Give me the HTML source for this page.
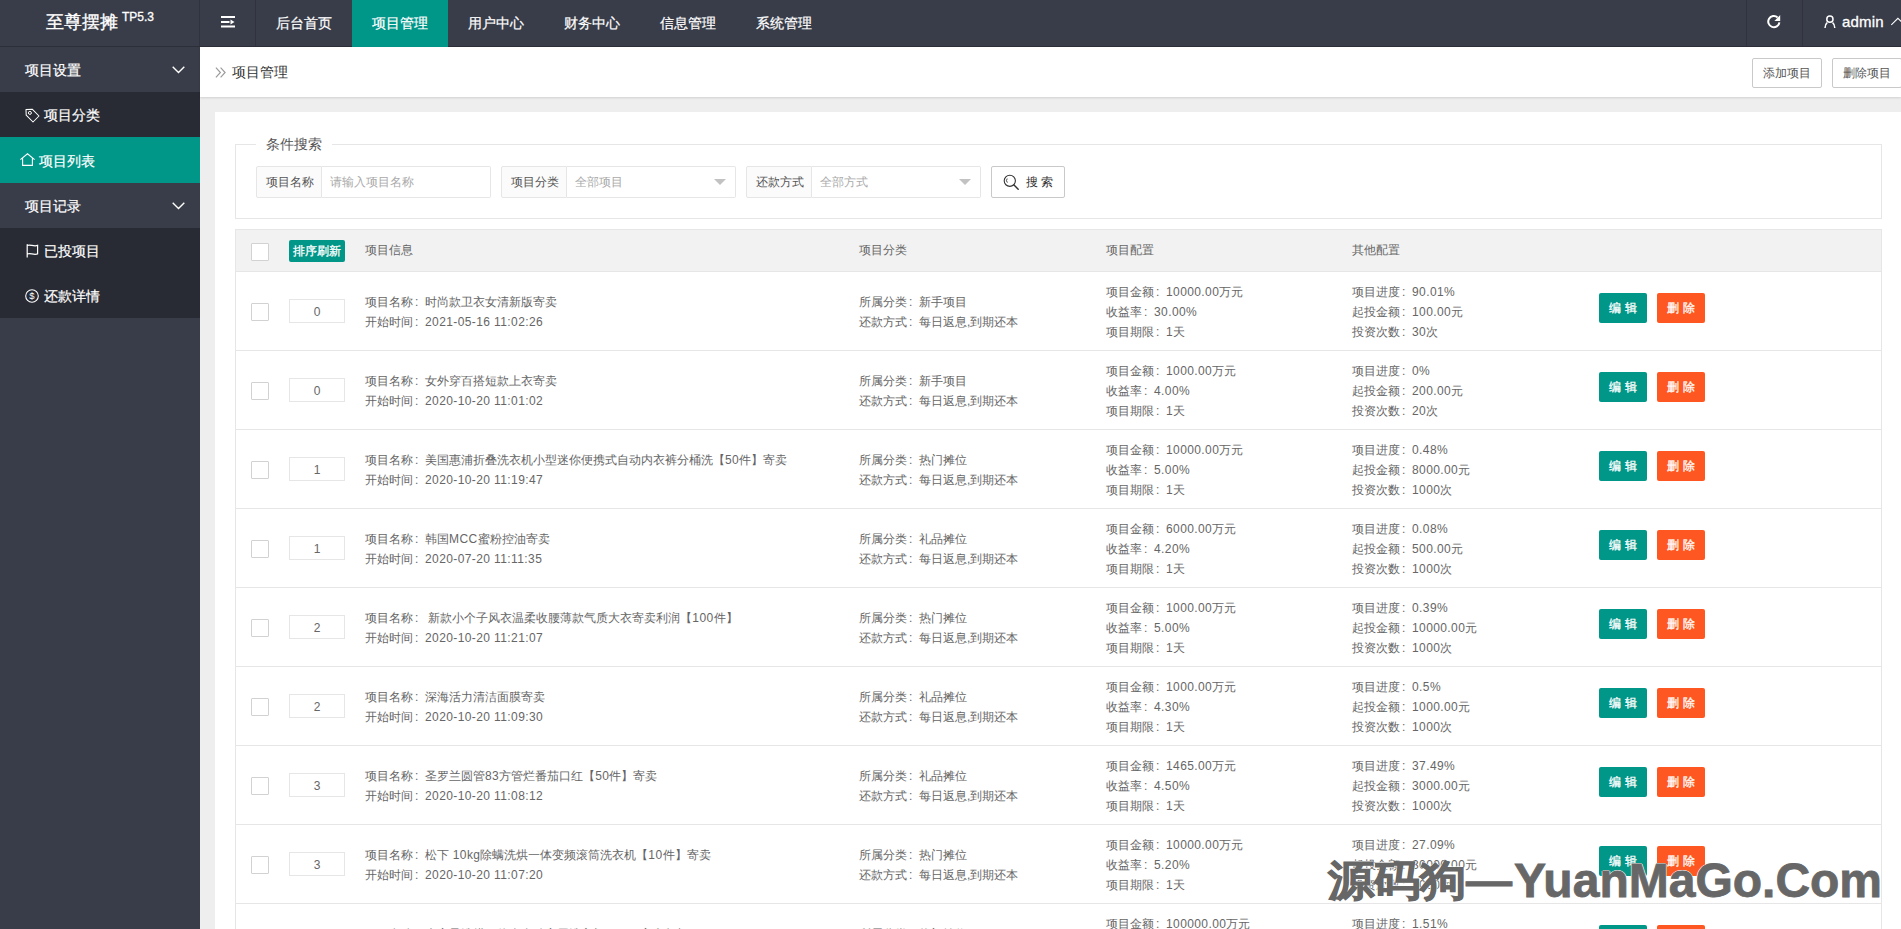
<!DOCTYPE html>
<html><head><meta charset="utf-8">
<style>
*{box-sizing:border-box;margin:0;padding:0}
html,body{width:1901px;height:929px;overflow:hidden}
body{position:relative;background:#eeeeee;font-family:"Liberation Sans",sans-serif;color:#666;font-size:12px}
svg{position:absolute;display:block}
#hdr{position:absolute;left:0;top:0;width:1901px;height:47px;background:#393d49;border-bottom:1px solid #2c2f38}
.vl{position:absolute;top:0;width:1px;height:46px;background:#30333d}
.logo{position:absolute;left:0;top:0;width:200px;height:46px;color:#fff;white-space:nowrap;-webkit-text-stroke:0.3px #fff}
.logo b{font-weight:normal;font-size:18px;position:absolute;left:46px;top:12px;line-height:20px}
.logo sup{position:absolute;left:122px;top:7px;font-size:12px;line-height:20px}
.nav{position:absolute;top:0;height:46px;width:96px;color:#fff;font-size:14px;line-height:46px;text-align:center;-webkit-text-stroke:0.2px #fff}
.nav.on{background:#009688;height:47px}
.admin{position:absolute;left:1842px;top:0;line-height:44px;font-size:15px;letter-spacing:0.2px;color:#fff;-webkit-text-stroke:0.3px #fff}
#side{position:absolute;left:0;top:47px;width:200px;height:882px;background:#393d49}
.si{position:absolute;left:0;width:200px;height:45px;color:#fff;font-size:14px;line-height:45px;white-space:nowrap;-webkit-text-stroke:0.2px #fff}
.si span{position:absolute;top:1px}
.si.ch{background:#282b33}
.si.on{background:#009688;height:46px;line-height:46px}
#crumb{position:absolute;left:200px;top:47px;width:1701px;height:50px;background:#fff;box-shadow:0 1px 2px rgba(0,0,0,.12)}
.crumbt{position:absolute;left:32px;top:15px;font-size:14px;line-height:20px;color:#333}
#card{position:absolute;left:215px;top:112px;width:1686px;height:817px;background:#fff}
.btnp{position:absolute;top:58px;width:70px;height:30px;border:1px solid #c9c9c9;border-radius:2px;background:#fff;color:#555;font-size:12px;line-height:28px;text-align:center}
.fs{position:absolute;left:235px;top:144px;width:1647px;height:75px;border:1px solid #e6e6e6}
.legend{position:absolute;left:256px;top:134px;width:76px;height:20px;background:#fff;color:#555;font-size:14px;line-height:20px;text-align:center}
.lab{position:absolute;top:166px;height:32px;width:66px;border:1px solid #e6e6e6;border-radius:2px 0 0 2px;background:#fbfbfb;color:#555;font-size:12px;line-height:30px;padding-left:9px}
.inp{position:absolute;top:166px;height:32px;width:169px;border:1px solid #e6e6e6;border-left:none;border-radius:0 2px 2px 0;background:#fff;color:#aaa;font-size:12px;line-height:30px;padding-left:8px}
.tri{position:absolute;top:179px;width:0;height:0;border-left:6px solid transparent;border-right:6px solid transparent;border-top:6px solid #c2c2c2}
.sbtn{position:absolute;left:991px;top:166px;width:74px;height:32px;border:1px solid #c9c9c9;border-radius:2px;background:#fff;color:#333;font-size:12px;line-height:30px}
.thd{position:absolute;left:235px;top:229px;width:1647px;height:43px;border:1px solid #e6e6e6;background:#f2f2f2}
.th{position:absolute;top:10px;font-size:12px;line-height:20px;color:#666}
.cb{position:absolute;left:15px;width:18px;height:18px;border:1px solid #d2d2d2;background:#fff;border-radius:1px}
.row{position:absolute;left:235px;width:1647px;height:79px;border:1px solid #e6e6e6;border-top:none;background:#fff}
.sortin{position:absolute;left:53px;width:56px;height:24px;border:1px solid #e6e6e6;text-align:center;font-size:12px;line-height:24px;color:#666}
.t2{position:absolute;font-size:12px;line-height:20px;color:#666;white-space:nowrap}
.bt{position:absolute;width:48px;height:30px;border-radius:2px;color:#fff;font-size:12px;line-height:31px;text-align:center;-webkit-text-stroke:0.3px #fff}
.g{background:#009688}
.o{background:#ff5722}
.wm{position:absolute;font-weight:bold;color:#676767;white-space:nowrap;line-height:56px;text-shadow:1px 0 #fff,-1px 0 #fff,0 1px #fff,0 -1px #fff}
.wm1{left:1328px;top:855px;font-size:46px;transform:scaleY(0.91);transform-origin:0 0;-webkit-text-stroke:1px #676767}
.wm2{left:1514px;top:853px;font-size:48px;-webkit-text-stroke:0.8px #676767}
.n{letter-spacing:0.4px}

.c{font-style:normal;display:inline-block;width:12px;padding-left:2px}

</style></head><body>
<div id="hdr">
  <div class="logo"><b>至尊摆摊</b><sup>TP5.3</sup></div>
  <div class="vl" style="left:199px"></div>
  <div class="vl" style="left:255px"></div>
  <svg style="left:221px;top:16px" width="14" height="12" viewBox="0 0 14 12"><rect x="0" y="0" width="14" height="2" fill="#fff"/><rect x="0" y="5" width="8.5" height="2" fill="#fff"/><path d="M9.5 3.6 L13.5 6 L9.5 8.4Z" fill="#fff"/><rect x="0" y="9.5" width="14" height="2" fill="#fff"/></svg>
  <div class="nav" style="left:256px">后台首页</div>
  <div class="nav on" style="left:352px">项目管理</div>
  <div class="nav" style="left:448px">用户中心</div>
  <div class="nav" style="left:544px">财务中心</div>
  <div class="nav" style="left:640px">信息管理</div>
  <div class="nav" style="left:736px">系统管理</div>
  <div class="vl" style="left:1746px"></div>
  <div class="vl" style="left:1802px"></div>
  <svg style="left:1766px;top:14px" width="16" height="16" viewBox="0 0 16 16"><path d="M13.4 8.3 A5.6 5.6 0 1 1 11.6 3.4" fill="none" stroke="#fff" stroke-width="2"/><path d="M14.2 1.1 L14.2 6.9 L8.4 6.9Z" fill="#fff"/></svg>
  <svg style="left:1823px;top:14px" width="14" height="14" viewBox="0 0 14 14"><circle cx="6.9" cy="5.2" r="3.1" fill="none" stroke="#fff" stroke-width="1.5"/><path d="M2 13.9 C2 11.4 2.6 9.9 4.2 8.6 M11.8 13.9 C11.8 11.4 11.2 9.9 9.6 8.6" fill="none" stroke="#fff" stroke-width="1.5"/></svg>
  <div class="admin">admin</div>
  <svg style="left:1890px;top:17px" width="14" height="9" viewBox="0 0 14 9"><path d="M1.3 7.8 L7.9 1.3 L14.5 7.8" fill="none" stroke="#fff" stroke-width="1.1"/></svg>
</div>
<div id="side">
  <div class="si" style="top:0"><span style="left:25px">项目设置</span><svg style="left:172px;top:19px" width="13" height="8" viewBox="0 0 13 8"><path d="M0.7 0.8 L6.5 6.6 L12.3 0.8" fill="none" stroke="#fff" stroke-width="1.4"/></svg></div>
  <div class="si ch" style="top:45px"><svg style="left:25px;top:16px" width="15" height="15" viewBox="0 0 15 15"><path d="M1 1.5 L7.2 1.2 L14 8 L8 14 L1.2 7.2Z" fill="none" stroke="#fff" stroke-width="1.05" stroke-linejoin="round"/><circle cx="4.9" cy="4.9" r="1.5" fill="none" stroke="#fff" stroke-width="1"/></svg><span style="left:44px">项目分类</span></div>
  <div class="si on" style="top:90px"><svg style="left:20px;top:16px" width="15" height="13" viewBox="0 0 15 13"><path d="M0.4 6.6 L7.5 0.8 L14.6 6.6 M2.6 5 V12.4 H12.4 V5" fill="none" stroke="#fff" stroke-width="1.1"/></svg><span style="left:39px">项目列表</span></div>
  <div class="si" style="top:136px"><span style="left:25px">项目记录</span><svg style="left:172px;top:19px" width="13" height="8" viewBox="0 0 13 8"><path d="M0.7 0.8 L6.5 6.6 L12.3 0.8" fill="none" stroke="#fff" stroke-width="1.4"/></svg></div>
  <div class="si ch" style="top:181px"><svg style="left:26px;top:16px" width="13" height="14" viewBox="0 0 13 14"><path d="M1.2 0.3 V13.5 M1.2 1.5 C4 -0.2 7.5 3 11.6 1.4 V9.9 C7.5 11.4 4 8.4 1.2 10" fill="none" stroke="#fff" stroke-width="1.2"/></svg><span style="left:44px">已投项目</span></div>
  <div class="si ch" style="top:226px"><svg style="left:25px;top:16px" width="15" height="15" viewBox="0 0 15 15"><circle cx="7" cy="7" r="6.3" fill="none" stroke="#fff" stroke-width="1.1"/><text x="7" y="10.4" font-size="9.5" text-anchor="middle" fill="#fff" font-family="Liberation Sans">$</text></svg><span style="left:44px">还款详情</span></div>
</div>
<div id="crumb">
  <svg style="left:15px;top:20px" width="12" height="12" viewBox="0 0 12 12"><path d="M0.9 0.7 L5.4 5.5 L0.9 10.3 M5.6 0.7 L10.1 5.5 L5.6 10.3" fill="none" stroke="#999" stroke-width="1.15"/></svg>
  <div class="crumbt">项目管理</div>
</div>
<div id="card"></div>
<div class="btnp" style="left:1752px">添加项目</div>
<div class="btnp" style="left:1832px">删除项目</div>
<div class="fs"></div>
<div class="legend">条件搜索</div>
<div class="lab" style="left:256px">项目名称</div><div class="inp" style="left:322px">请输入项目名称</div>
<div class="lab" style="left:501px">项目分类</div><div class="inp" style="left:567px">全部项目</div><i class="tri" style="left:714px"></i>
<div class="lab" style="left:746px">还款方式</div><div class="inp" style="left:812px">全部方式</div><i class="tri" style="left:959px"></i>
<div class="sbtn"><svg style="left:11px;top:7px" width="17" height="17" viewBox="0 0 17 17"><circle cx="6.8" cy="6.8" r="5.6" fill="none" stroke="#333" stroke-width="1.1"/><path d="M11 11 L15.2 15.2" stroke="#333" stroke-width="1.4" stroke-linecap="round"/><path d="M4.2 4.6 A3 3 0 0 0 4.4 8.6" fill="none" stroke="#333" stroke-width="0.9"/></svg><span style="position:absolute;left:34px;top:0">搜 索</span></div>
<div class="thd">
  <i class="cb" style="top:13px"></i>
  <div class="bt g" style="left:53px;top:10px;width:56px;height:22px;line-height:23px">排序刷新</div>
  <div class="th" style="left:129px">项目信息</div>
  <div class="th" style="left:623px">项目分类</div>
  <div class="th" style="left:870px">项目配置</div>
  <div class="th" style="left:1116px">其他配置</div>
</div>
<div class="row" style="top:272px"><i class="cb" style="top:31px"></i><div class="sortin" style="top:27px">0</div><div class="t2" style="left:129px;top:20px">项目名称<i class="c">:</i>时尚款卫衣女清新版寄卖<br>开始时间<i class="c">:</i><span class="n">2021-05-16 11:02:26</span></div><div class="t2" style="left:623px;top:20px">所属分类<i class="c">:</i>新手项目<br>还款方式<i class="c">:</i>每日返息,到期还本</div><div class="t2" style="left:870px;top:10px">项目金额<i class="c">:</i><span class="n">10000.00</span>万元<br>收益率<i class="c">:</i><span class="n">30.00%</span><br>项目期限<i class="c">:</i><span class="n">1</span>天</div><div class="t2" style="left:1116px;top:10px">项目进度<i class="c">:</i><span class="n">90.01%</span><br>起投金额<i class="c">:</i><span class="n">100.00</span>元<br>投资次数<i class="c">:</i><span class="n">30</span>次</div><div class="bt g" style="left:1363px;top:21px">编 辑</div><div class="bt o" style="left:1421px;top:21px">删 除</div></div>
<div class="row" style="top:351px"><i class="cb" style="top:31px"></i><div class="sortin" style="top:27px">0</div><div class="t2" style="left:129px;top:20px">项目名称<i class="c">:</i>女外穿百搭短款上衣寄卖<br>开始时间<i class="c">:</i><span class="n">2020-10-20 11:01:02</span></div><div class="t2" style="left:623px;top:20px">所属分类<i class="c">:</i>新手项目<br>还款方式<i class="c">:</i>每日返息,到期还本</div><div class="t2" style="left:870px;top:10px">项目金额<i class="c">:</i><span class="n">1000.00</span>万元<br>收益率<i class="c">:</i><span class="n">4.00%</span><br>项目期限<i class="c">:</i><span class="n">1</span>天</div><div class="t2" style="left:1116px;top:10px">项目进度<i class="c">:</i><span class="n">0%</span><br>起投金额<i class="c">:</i><span class="n">200.00</span>元<br>投资次数<i class="c">:</i><span class="n">20</span>次</div><div class="bt g" style="left:1363px;top:21px">编 辑</div><div class="bt o" style="left:1421px;top:21px">删 除</div></div>
<div class="row" style="top:430px"><i class="cb" style="top:31px"></i><div class="sortin" style="top:27px">1</div><div class="t2" style="left:129px;top:20px">项目名称<i class="c">:</i>美国惠浦折叠洗衣机小型迷你便携式自动内衣裤分桶洗【<span class="n">50</span>件】寄卖<br>开始时间<i class="c">:</i><span class="n">2020-10-20 11:19:47</span></div><div class="t2" style="left:623px;top:20px">所属分类<i class="c">:</i>热门摊位<br>还款方式<i class="c">:</i>每日返息,到期还本</div><div class="t2" style="left:870px;top:10px">项目金额<i class="c">:</i><span class="n">10000.00</span>万元<br>收益率<i class="c">:</i><span class="n">5.00%</span><br>项目期限<i class="c">:</i><span class="n">1</span>天</div><div class="t2" style="left:1116px;top:10px">项目进度<i class="c">:</i><span class="n">0.48%</span><br>起投金额<i class="c">:</i><span class="n">8000.00</span>元<br>投资次数<i class="c">:</i><span class="n">1000</span>次</div><div class="bt g" style="left:1363px;top:21px">编 辑</div><div class="bt o" style="left:1421px;top:21px">删 除</div></div>
<div class="row" style="top:509px"><i class="cb" style="top:31px"></i><div class="sortin" style="top:27px">1</div><div class="t2" style="left:129px;top:20px">项目名称<i class="c">:</i>韩国<span class="n">MCC</span>蜜粉控油寄卖<br>开始时间<i class="c">:</i><span class="n">2020-07-20 11:11:35</span></div><div class="t2" style="left:623px;top:20px">所属分类<i class="c">:</i>礼品摊位<br>还款方式<i class="c">:</i>每日返息,到期还本</div><div class="t2" style="left:870px;top:10px">项目金额<i class="c">:</i><span class="n">6000.00</span>万元<br>收益率<i class="c">:</i><span class="n">4.20%</span><br>项目期限<i class="c">:</i><span class="n">1</span>天</div><div class="t2" style="left:1116px;top:10px">项目进度<i class="c">:</i><span class="n">0.08%</span><br>起投金额<i class="c">:</i><span class="n">500.00</span>元<br>投资次数<i class="c">:</i><span class="n">1000</span>次</div><div class="bt g" style="left:1363px;top:21px">编 辑</div><div class="bt o" style="left:1421px;top:21px">删 除</div></div>
<div class="row" style="top:588px"><i class="cb" style="top:31px"></i><div class="sortin" style="top:27px">2</div><div class="t2" style="left:129px;top:20px">项目名称<i class="c">:</i> 新款小个子风衣温柔收腰薄款气质大衣寄卖利润【<span class="n">100</span>件】<br>开始时间<i class="c">:</i><span class="n">2020-10-20 11:21:07</span></div><div class="t2" style="left:623px;top:20px">所属分类<i class="c">:</i>热门摊位<br>还款方式<i class="c">:</i>每日返息,到期还本</div><div class="t2" style="left:870px;top:10px">项目金额<i class="c">:</i><span class="n">1000.00</span>万元<br>收益率<i class="c">:</i><span class="n">5.00%</span><br>项目期限<i class="c">:</i><span class="n">1</span>天</div><div class="t2" style="left:1116px;top:10px">项目进度<i class="c">:</i><span class="n">0.39%</span><br>起投金额<i class="c">:</i><span class="n">10000.00</span>元<br>投资次数<i class="c">:</i><span class="n">1000</span>次</div><div class="bt g" style="left:1363px;top:21px">编 辑</div><div class="bt o" style="left:1421px;top:21px">删 除</div></div>
<div class="row" style="top:667px"><i class="cb" style="top:31px"></i><div class="sortin" style="top:27px">2</div><div class="t2" style="left:129px;top:20px">项目名称<i class="c">:</i>深海活力清洁面膜寄卖<br>开始时间<i class="c">:</i><span class="n">2020-10-20 11:09:30</span></div><div class="t2" style="left:623px;top:20px">所属分类<i class="c">:</i>礼品摊位<br>还款方式<i class="c">:</i>每日返息,到期还本</div><div class="t2" style="left:870px;top:10px">项目金额<i class="c">:</i><span class="n">1000.00</span>万元<br>收益率<i class="c">:</i><span class="n">4.30%</span><br>项目期限<i class="c">:</i><span class="n">1</span>天</div><div class="t2" style="left:1116px;top:10px">项目进度<i class="c">:</i><span class="n">0.5%</span><br>起投金额<i class="c">:</i><span class="n">1000.00</span>元<br>投资次数<i class="c">:</i><span class="n">1000</span>次</div><div class="bt g" style="left:1363px;top:21px">编 辑</div><div class="bt o" style="left:1421px;top:21px">删 除</div></div>
<div class="row" style="top:746px"><i class="cb" style="top:31px"></i><div class="sortin" style="top:27px">3</div><div class="t2" style="left:129px;top:20px">项目名称<i class="c">:</i>圣罗兰圆管<span class="n">83</span>方管烂番茄口红【<span class="n">50</span>件】寄卖<br>开始时间<i class="c">:</i><span class="n">2020-10-20 11:08:12</span></div><div class="t2" style="left:623px;top:20px">所属分类<i class="c">:</i>礼品摊位<br>还款方式<i class="c">:</i>每日返息,到期还本</div><div class="t2" style="left:870px;top:10px">项目金额<i class="c">:</i><span class="n">1465.00</span>万元<br>收益率<i class="c">:</i><span class="n">4.50%</span><br>项目期限<i class="c">:</i><span class="n">1</span>天</div><div class="t2" style="left:1116px;top:10px">项目进度<i class="c">:</i><span class="n">37.49%</span><br>起投金额<i class="c">:</i><span class="n">3000.00</span>元<br>投资次数<i class="c">:</i><span class="n">1000</span>次</div><div class="bt g" style="left:1363px;top:21px">编 辑</div><div class="bt o" style="left:1421px;top:21px">删 除</div></div>
<div class="row" style="top:825px"><i class="cb" style="top:31px"></i><div class="sortin" style="top:27px">3</div><div class="t2" style="left:129px;top:20px">项目名称<i class="c">:</i>松下<span class="n"> 10kg</span>除螨洗烘一体变频滚筒洗衣机【<span class="n">10</span>件】寄卖<br>开始时间<i class="c">:</i><span class="n">2020-10-20 11:07:20</span></div><div class="t2" style="left:623px;top:20px">所属分类<i class="c">:</i>热门摊位<br>还款方式<i class="c">:</i>每日返息,到期还本</div><div class="t2" style="left:870px;top:10px">项目金额<i class="c">:</i><span class="n">10000.00</span>万元<br>收益率<i class="c">:</i><span class="n">5.20%</span><br>项目期限<i class="c">:</i><span class="n">1</span>天</div><div class="t2" style="left:1116px;top:10px">项目进度<i class="c">:</i><span class="n">27.09%</span><br>起投金额<i class="c">:</i><span class="n">30000.00</span>元<br>投资次数<i class="c">:</i><span class="n">1000</span>次</div><div class="bt g" style="left:1363px;top:21px">编 辑</div><div class="bt o" style="left:1421px;top:21px">删 除</div></div>
<div class="row" style="top:904px"><i class="cb" style="top:31px"></i><div class="sortin" style="top:27px">4</div><div class="t2" style="left:129px;top:20px">项目名称<i class="c">:</i>大容量洗烘一体全自动家用洗衣机<span class="n"> 10kg </span>寄卖包邮<br>开始时间<i class="c">:</i><span class="n">2020-10-20 11:06:11</span></div><div class="t2" style="left:623px;top:20px">所属分类<i class="c">:</i>热门摊位<br>还款方式<i class="c">:</i>每日返息,到期还本</div><div class="t2" style="left:870px;top:10px">项目金额<i class="c">:</i><span class="n">100000.00</span>万元<br>收益率<i class="c">:</i><span class="n">5.00%</span><br>项目期限<i class="c">:</i><span class="n">1</span>天</div><div class="t2" style="left:1116px;top:10px">项目进度<i class="c">:</i><span class="n">1.51%</span><br>起投金额<i class="c">:</i><span class="n">1000.00</span>元<br>投资次数<i class="c">:</i><span class="n">1000</span>次</div><div class="bt g" style="left:1363px;top:21px">编 辑</div><div class="bt o" style="left:1421px;top:21px">删 除</div></div>
<div class="wm wm1">源码狗—</div><div class="wm wm2">YuanMaGo.Com</div>
</body></html>
